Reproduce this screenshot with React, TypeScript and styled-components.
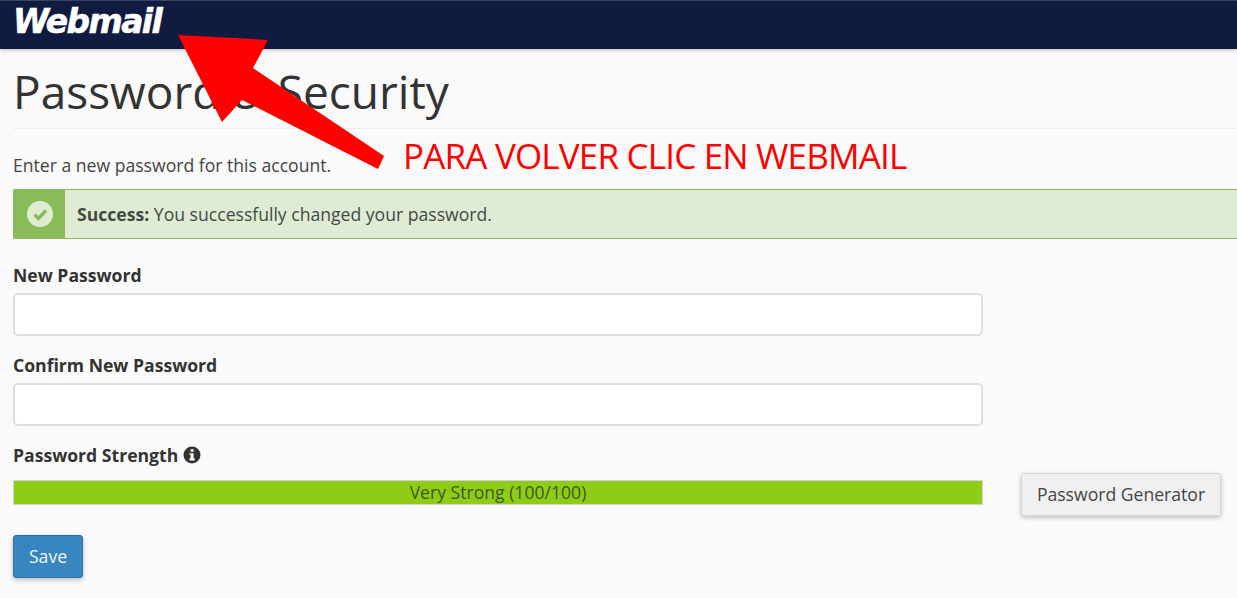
import * as React from 'react';
import styled, { createGlobalStyle } from "styled-components";

const GlobalStyle = createGlobalStyle`
    html, body {
        margin: 0;
        padding: 0;
        height: 100%;
        overflow: hidden;
        background: #fafafa;
        font-family: "Open Sans", "Noto Sans", sans-serif;
        color: #333;
    }
`;

const Page = styled.div`
    position: relative;
    width: 1237px;
    height: 598px;
    overflow: hidden;
`;

const TopBar = styled.header`
    box-sizing: border-box;
    height: 49px;
    padding-left: 13px;
    background: #101b40;
    border-top: 1px solid #3a4361;
    box-shadow: 0 1px 4px rgba(0, 0, 0, 0.25);
`;

const Logo = styled.a`
    display: block;
    width: 150px;
    height: 32px;
    font-family: "DejaVu Sans", sans-serif;
    font-size: 33px;
    font-weight: 700;
    font-style: italic;
    line-height: 41px;
    letter-spacing: -1.5px;
    color: #fff;
    -webkit-text-stroke: 0.6px #fff;
    transform: scaleX(0.995);
    transform-origin: left center;
`;

const Content = styled.main`
    padding: 14px 0 0 13px;
`;

const Title = styled.h1`
    margin: 0 0 1px;
    height: 64px;
    font-size: 46px;
    font-weight: 400;
    line-height: 56px;
    color: #333;
`;

const Rule = styled.hr`
    margin: 0 0 25px;
    border: 0;
    border-top: 1px solid #eee;
`;

const Intro = styled.p`
    margin: 0 0 13px;
    font-size: 17.6px;
    line-height: 22px;
    color: #444;
`;

const Alert = styled.div`
    box-sizing: border-box;
    display: flex;
    align-items: center;
    height: 50px;
    margin-bottom: 25px;
    border: 1px solid #8abb59;
    border-right: 0;
    border-radius: 2px 0 0 2px;
    background: #dfebd3;
    font-size: 17.6px;
    color: #3f4a45;
`;

const AlertIcon = styled.div`
    display: flex;
    align-items: center;
    justify-content: center;
    align-self: stretch;
    width: 51px;
    margin-right: 12px;
    background: #89bb58;
`;

const Field = styled.div`
    width: 970px;
    margin-bottom: 18px;
`;

const Label = styled.label`
    display: flex;
    align-items: center;
    gap: 5px;
    height: 22px;
    margin-bottom: 7px;
    font-size: 17.6px;
    font-weight: 700;
    line-height: 22px;
    color: #333;
`;

const TextInput = styled.input`
    box-sizing: border-box;
    display: block;
    width: 100%;
    height: 43px;
    border: 2px solid #dedede;
    border-radius: 5px;
    background: #fff;
`;

const StrengthRow = styled.div`
    display: flex;
    align-items: flex-start;
    gap: 38px;
    height: 55px;
    margin-top: 14px;
`;

const StrengthBar = styled.div`
    box-sizing: border-box;
    width: 970px;
    height: 25px;
    border: 1px solid #d3d3d3;
    background: #8fcc17;
    text-align: center;
    font-size: 17.6px;
    line-height: 23px;
    color: #3d5a12;
`;

const GeneratorButton = styled.button`
    box-sizing: border-box;
    width: 200px;
    height: 43px;
    margin-top: -7px;
    padding: 0 0 2px;
    border: 1px solid #d5d5d5;
    border-radius: 2px;
    background: #f0f0f0;
    box-shadow: 0 2px 5px rgba(0, 0, 0, 0.22);
    font-family: inherit;
    font-size: 17.6px;
    color: #444;
`;

const SaveButton = styled.button`
    box-sizing: border-box;
    display: block;
    width: 70px;
    height: 43px;
    padding: 0 0 2px;
    border: 1px solid #2a6fa6;
    border-radius: 3px;
    background: #3786bf;
    box-shadow: 0 2px 5px rgba(0, 0, 0, 0.25);
    font-family: inherit;
    font-size: 17.6px;
    color: #eef5fa;
`;

const ArrowSvg = styled.svg`
    position: absolute;
    left: 0;
    top: 0;
    width: 400px;
    height: 180px;
    pointer-events: none;
`;

const Note = styled.div`
    position: absolute;
    left: 403px;
    top: 132px;
    font-size: 35px;
    line-height: 48px;
    letter-spacing: -0.82px;
    white-space: nowrap;
    color: #f00;
`;

const CheckIcon = () => (
    <svg width="26" height="26" viewBox="0 0 26 26">
        <circle cx="13" cy="13" r="13" fill="#dfebd3" />
        <path d="M7.5 13.5l4 4 7.5-8" fill="none" stroke="#89bb58" strokeWidth="3.4" />
    </svg>
);

const InfoIcon = () => (
    <svg width="18" height="18" viewBox="0 0 18 18">
        <circle cx="9" cy="9" r="8.5" fill="#333" />
        <rect x="7.6" y="3.2" width="3" height="2.6" fill="#fafafa" />
        <path d="M6.6 7.2h4v5.4h1.2v1.9H6.4v-1.9h1.2V9.1h-1z" fill="#fafafa" />
    </svg>
);

export default function App() {
    return (
        <Page>
            <GlobalStyle />
            <TopBar>
                <Logo>Webmail</Logo>
            </TopBar>
            <Content>
                <Title>Password &amp; Security</Title>
                <Rule />
                <Intro>Enter a new password for this account.</Intro>
                <Alert>
                    <AlertIcon><CheckIcon /></AlertIcon>
                    <span><b>Success:</b> You successfully changed your password.</span>
                </Alert>
                <Field>
                    <Label>New Password</Label>
                    <TextInput type="password" />
                </Field>
                <Field>
                    <Label>Confirm New Password</Label>
                    <TextInput type="password" />
                </Field>
                <Label>Password Strength <InfoIcon /></Label>
                <StrengthRow>
                    <StrengthBar>Very Strong (100/100)</StrengthBar>
                    <GeneratorButton>Password Generator</GeneratorButton>
                </StrengthRow>
                <SaveButton>Save</SaveButton>
            </Content>
            <ArrowSvg viewBox="0 0 400 180">
                <polygon points="178,35 268,40 253,68 384,156 378,169 242,100 222,122" fill="#f00" />
            </ArrowSvg>
            <Note>PARA VOLVER CLIC EN WEBMAIL</Note>
        </Page>
    );
}
